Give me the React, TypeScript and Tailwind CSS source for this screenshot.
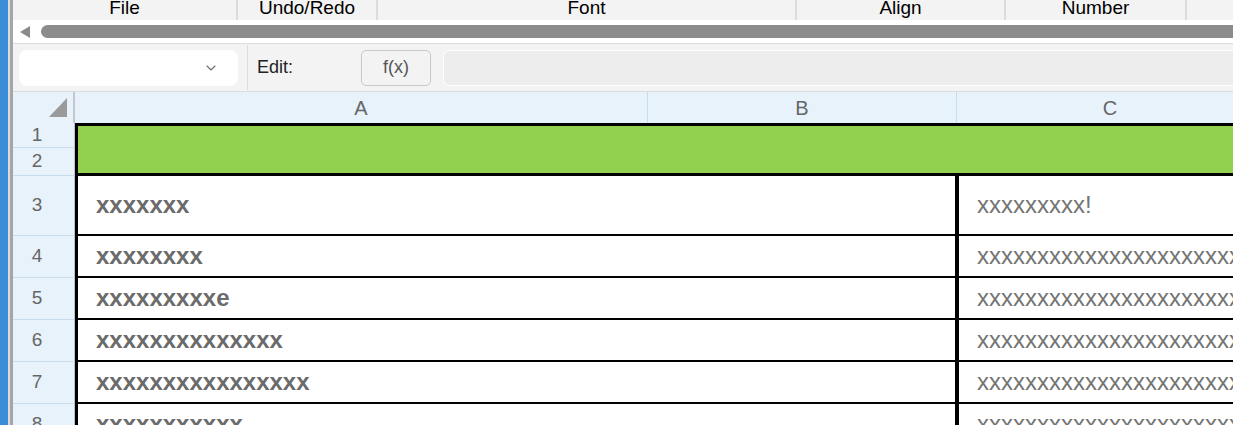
import { ChevronDown } from "lucide-react";

const tabs = [
  { label: "File", w: "w-[225px]" },
  { label: "Undo/Redo", w: "w-[140px]" },
  { label: "Font", w: "w-[419px]" },
  { label: "Align", w: "w-[209px]" },
  { label: "Number", w: "w-[181px]" },
];

const long = "xxxxxxxxxxxxxxxxxxxxxxxxxxxxxxxxxxxxx";

const rows = [
  { n: "3", h: "h-[60px]", a: "xxxxxxx", c: "xxxxxxxxx!" },
  { n: "4", h: "h-[42px]", a: "xxxxxxxx", c: long },
  { n: "5", h: "h-[42px]", a: "xxxxxxxxxe", c: long },
  { n: "6", h: "h-[42px]", a: "xxxxxxxxxxxxxx", c: long },
  { n: "7", h: "h-[42px]", a: "xxxxxxxxxxxxxxxx", c: long },
  { n: "8", h: "h-[42px]", a: "xxxxxxxxxxx", c: long },
];

function RowHead({ n, h }: { n: string; h: string }) {
  return (
    <div
      className={`${h} w-[62px] shrink-0 flex items-center justify-center pr-[13px] bg-[#e8f2fa] border-r border-r-[#b9c3cc] border-b border-b-[#c9dced] text-[19px] text-[#666]`}
    >
      {n}
    </div>
  );
}

export default function App() {
  return (
    <div className="flex h-[425px] w-[1233px] overflow-hidden bg-white font-['Liberation_Sans',Arial,sans-serif]">
      <div className="w-[8px] shrink-0 bg-[#3a8dd6]" />
      <div className="w-[2px] shrink-0 bg-[#dcdcdc]" />
      <div className="w-[3px] shrink-0 bg-[#a6a6a6]" />

      <div className="flex min-w-0 flex-1 flex-col overflow-hidden">
        {/* ribbon tabs */}
        <div className="flex h-[20px] shrink-0 overflow-hidden bg-[#f3f3f3]">
          {tabs.map((t) => (
            <div
              key={t.label}
              className={`${t.w} shrink-0 border-r-2 border-[#dcdcdc] text-center text-[19px] leading-[15px] text-black`}
            >
              {t.label}
            </div>
          ))}
          <div className="flex-1" />
        </div>

        {/* horizontal scroller */}
        <div className="flex h-[24px] shrink-0 items-center border-b border-[#dcdcdc] bg-white pl-[7px]">
          <svg width="10" height="12" viewBox="0 0 10 12" className="shrink-0">
            <path d="M10 0 L0 6 L10 12 Z" fill="#8a8a8a" />
          </svg>
          <div className="ml-[11px] h-[13px] flex-1 rounded-l-full bg-[#8c8c8c]" />
        </div>

        {/* formula bar */}
        <div className="flex h-[48px] shrink-0 items-center border-b border-[#dcdcdc] bg-[#f3f3f3] pl-[6px]">
          <div className="flex h-[36px] w-[219px] shrink-0 items-center justify-end rounded-[8px] bg-white pr-[19px]">
            <ChevronDown size={16} strokeWidth={1.75} color="#6f6f6f" />
          </div>
          <div className="ml-[9px] h-[45px] w-px shrink-0 bg-[#dcdcdc]" />
          <div className="ml-[9px] w-[104px] shrink-0 text-[18px] text-[#222]">Edit:</div>
          <div className="flex h-[36px] w-[70px] shrink-0 items-center justify-center rounded-[5px] border border-[#c8c8c8] text-[18px] text-[#555]">
            f(x)
          </div>
          <div className="ml-[12px] h-[36px] flex-1 rounded-l-[7px] border border-r-0 border-white bg-[#ededed]" />
        </div>

        {/* column headers */}
        <div className="flex h-[31px] shrink-0 bg-[#e8f2fa] text-[20px] text-[#666]">
          <div className="flex w-[62px] shrink-0 items-end justify-end border-r-2 border-[#c2c8ce] pb-[6px] pr-[6px]">
            <svg width="18" height="19" viewBox="0 0 18 19">
              <path d="M18 0 L18 19 L0 19 Z" fill="#9a9a9a" />
            </svg>
          </div>
          <div className="flex w-[573px] shrink-0 items-center justify-center border-r border-[#c9dced]">A</div>
          <div className="flex w-[309px] shrink-0 items-center justify-center border-r border-[#c9dced]">B</div>
          <div className="flex w-[306px] shrink-0 items-center justify-center">C</div>
        </div>

        {/* rows 1-2 merged title */}
        <div className="flex shrink-0">
          <div className="flex flex-col">
            <RowHead n="1" h="h-[25px]" />
            <RowHead n="2" h="h-[28px]" />
          </div>
          <div className="h-[53px] flex-1 border-y-[3px] border-l-[3px] border-black bg-[#92d050]" />
        </div>

        {rows.map((r) => (
          <div key={r.n} className="flex shrink-0">
            <RowHead n={r.n} h={r.h} />
            <div className={`${r.h} flex min-w-0 flex-1 border-b-2 border-l-[3px] border-black`}>
              <div className="flex w-[881px] shrink-0 items-center border-r-[4px] border-black pl-[18px] text-[24px] font-bold text-[#6b6b6b]">
                {r.a}
              </div>
              <div className="flex min-w-0 flex-1 items-center overflow-hidden whitespace-nowrap pl-[18px] text-[24px] text-[#747474]">
                {r.c}
              </div>
            </div>
          </div>
        ))}
      </div>
    </div>
  );
}
